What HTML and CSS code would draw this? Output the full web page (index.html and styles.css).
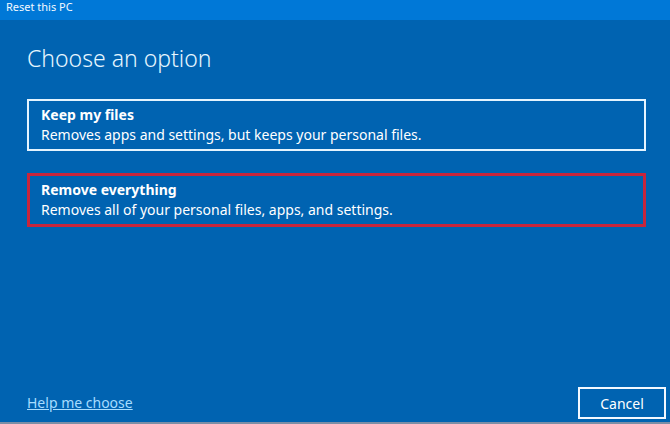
FILE: index.html
```html
<!DOCTYPE html>
<html>
<head>
<meta charset="utf-8">
<link rel="stylesheet" href="styles.css">
</head>
<body>
<div class="window">
  <div class="titlebar">Reset this PC</div>
  <div class="content">
    <h1 class="heading">Choose an option</h1>
    <div class="options">
      <div class="option">
        <div class="opt-title">Keep my files</div>
        <div class="opt-desc">Removes apps and settings, but keeps your personal files.</div>
      </div>
      <div class="option highlighted">
        <div class="opt-title">Remove everything</div>
        <div class="opt-desc">Removes all of your personal files, apps, and settings.</div>
      </div>
    </div>
    <div class="spacer"></div>
    <div class="footer">
      <a class="help" href="#">Help me choose</a>
      <button class="cancel">Cancel</button>
    </div>
  </div>
  <div class="bottom-edge"></div>
</div>
</body>
</html>
```
FILE: styles.css
```css
html, body {
  margin: 0;
  padding: 0;
  width: 670px;
  height: 424px;
  overflow: hidden;
}
body {
  font-family: "Noto Sans", "Open Sans", sans-serif;
  color: #ffffff;
  background: #0063b1;
}
.window {
  display: flex;
  flex-direction: column;
  height: 424px;
}
.titlebar {
  height: 20px;
  background: #0078d7;
  font-size: 11px;
  line-height: 13px;
  padding-left: 6px;
  color: #f2f8ff;
  box-sizing: border-box;
}
.content {
  flex: 1;
  display: flex;
  flex-direction: column;
  padding: 0 4px 0 27px;
}
.heading {
  margin: 23px 0 0 0;
  font-size: 23px;
  font-weight: 300;
  line-height: 30px;
  color: #e6f6ff;
}
.options {
  display: flex;
  flex-direction: column;
  gap: 22px;
  margin-top: 26px;
  width: 619px;
}
.option {
  border: 2px solid #e4f4ff;
  padding: 4px 12px 5px 12px;
}
.option.highlighted {
  border: 3px solid #c9263c;
  padding: 4px 11px 5px 11px;
}
.opt-title {
  font-weight: 700;
  font-size: 14px;
  line-height: 19px;
}
.opt-desc {
  font-size: 14px;
  line-height: 19px;
  margin-top: 1px;
}
.spacer {
  flex: 1;
}
.footer {
  display: flex;
  justify-content: space-between;
  align-items: flex-end;
  padding-bottom: 3px;
}
.help {
  color: #a6dcff;
  font-size: 14px;
  line-height: 20px;
  margin-bottom: 6px;
  text-decoration: underline;
}
.cancel {
  width: 88px;
  height: 32px;
  background: transparent;
  border: 2px solid #f2f8ff;
  color: #ffffff;
  font-family: "Noto Sans", "Open Sans", sans-serif;
  font-size: 14px;
  padding: 0;
}
.bottom-edge {
  height: 2px;
  background: #7b8ea6;
}
```
